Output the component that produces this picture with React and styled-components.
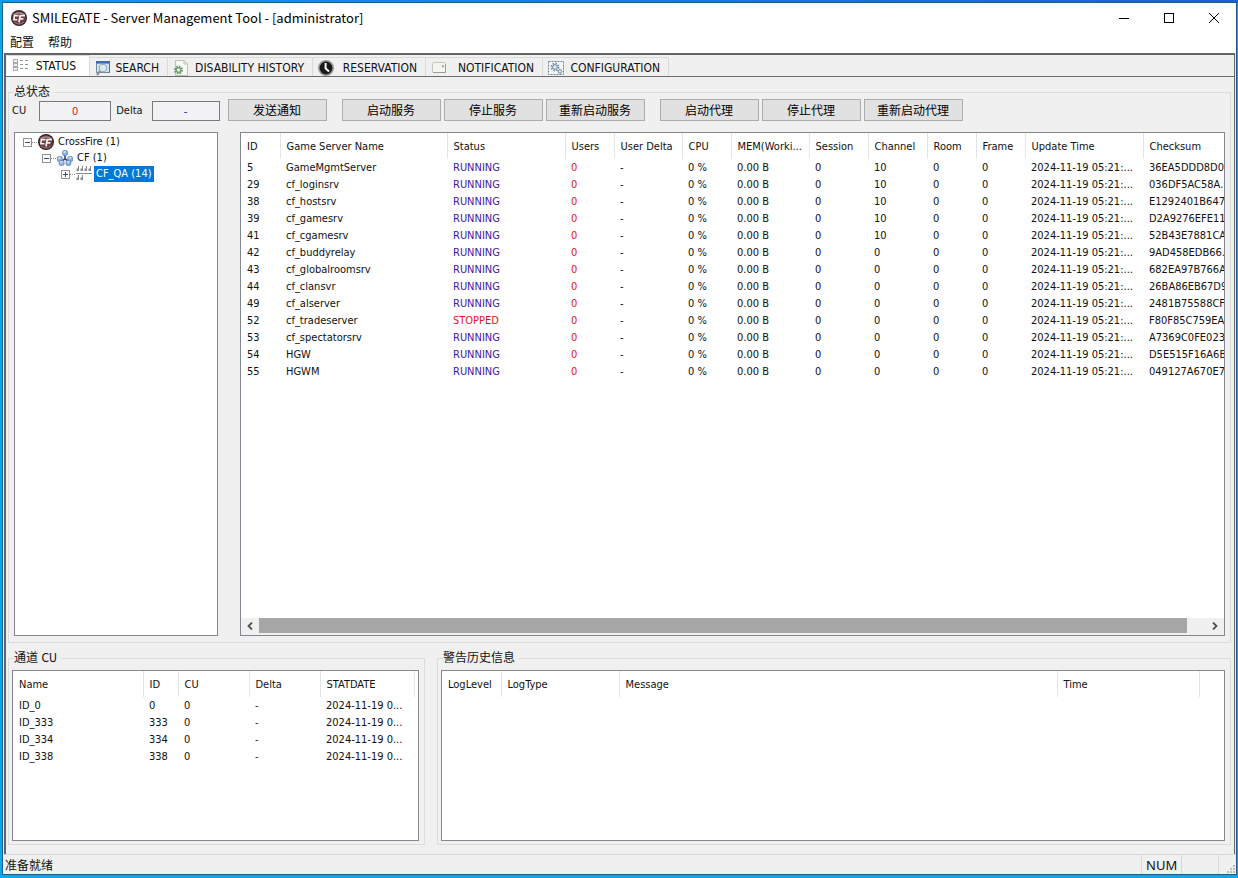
import React from "react";
import styled, { createGlobalStyle, css } from "styled-components";

const uiFont = `"DejaVu Sans Condensed", "Noto Sans CJK SC", sans-serif`;

const GlobalStyle = createGlobalStyle`
    * { box-sizing: border-box; }
    body { margin: 0; background: #18a2ea; }
    button, input { font: inherit; color: inherit; }
`;

const Desktop = styled.div`
    background: linear-gradient( to right, #0f9bea, #1c5fd0 ) top / 100% 3px no-repeat, #12a6e6;
    color: #101010;
    display: flex;
    font: 11px/14px ${ uiFont };
    min-height: 100vh;
    padding: 3px 2px 4px 3px;
`;

const Window = styled.div`
    background: #f0f0f0;
    display: flex;
    flex: 1;
    flex-direction: column;
    min-width: 0;
    outline: 1px solid #1a5f8c;
`;

const TitleBar = styled.header`
    align-items: center;
    background: #fff;
    color: #000;
    display: flex;
    font: 13px/28px "Noto Sans CJK SC", sans-serif;
    gap: 5px;
    height: 29px;
    padding-left: 8px;
`;

const Title = styled.h1`
    flex: 1;
    font: inherit;
    margin: 0;
`;

const WindowControls = styled.div`
    display: flex;
`;

const WindowButton = styled.button`
    align-items: center;
    background: none;
    border: 0;
    display: flex;
    height: 29px;
    justify-content: center;
    padding: 0;
    width: 45px;
`;

const MenuBar = styled.nav`
    background: #fff;
    display: flex;
    font-size: 12px;
    gap: 14px;
    height: 21px;
    padding-left: 7px;
`;

const MenuItem = styled.button`
    background: none;
    border: 0;
    line-height: 14px;
    padding: 0;
`;

const Frame = styled.main`
    border: solid #636363;
    border-width: 2px 1px 0 2px;
    display: flex;
    flex: 1;
    flex-direction: column;
    margin: 0 1px;
`;

const TabList = styled.div`
    border-bottom: 1px solid #6b6b6b;
    display: flex;
    height: 22px;
    padding-left: 1px;
`;

const Tab = styled.button`
    align-items: center;
    background: none;
    border: solid #dadada;
    border-width: 1px 1px 0 0;
    display: flex;
    font-size: 12px;
    justify-content: space-between;
    margin-top: 2px;
    padding: 1px 8px 0 5px;
    width: ${ props => props.$width }px;
    white-space: nowrap;

    ${ props => props.$active && css`
        background: #fff;
        margin-top: 0;
        padding: 0 13px 0 6px;
    ` }
`;

const Body = styled.div`
    display: flex;
    flex: 1;
    flex-direction: column;
    gap: 8px;
    padding: 8px 3px 9px 2px;
`;

const Group = styled.fieldset`
    border: 1px solid #dcdcdc;
    display: flex;
    flex: 1 1 0;
    flex-direction: column;
    margin: 0;
    min-width: 0;
    padding: ${ props => props.$padding };
`;

const Legend = styled.legend`
    font-size: 12px;
    line-height: 14px;
    margin-left: 2px;
    padding: 0 4px 0 0;
`;

const Toolbar = styled.div`
    align-items: flex-end;
    display: flex;
    height: 22px;
    margin-bottom: 11px;
`;

const CounterLabel = styled.label`
    align-items: center;
    display: flex;
    gap: ${ props => props.$gap }px;
    margin-right: ${ props => props.$after }px;
`;

const Counter = styled.input`
    background: #f2f2f4;
    border: 1px solid #7a7a7a;
    color: ${ props => props.$color };
    height: 20px;
    padding: 0;
    text-align: center;
    width: ${ props => props.$width }px;
`;

const ButtonGroup = styled.div`
    display: flex;
    gap: 3px;
    margin-right: 15px;
`;

const Button = styled.button`
    background: #e1e1e1;
    border: 1px solid #adadad;
    color: #000;
    font-size: 12px;
    height: 22px;
    line-height: 16px;
    padding: 1px 0 0;
    width: 99px;
`;

const Split = styled.div`
    display: grid;
    flex: 1;
    gap: 22px;
    grid-template-columns: 204px minmax( 0, 1fr );
    padding: 0 0 0 2px;
`;

const Panel = styled.div`
    background: #fff;
    border: 1px solid #828790;
    display: flex;
    flex: 1;
    flex-direction: column;
    min-width: 0;
    overflow: hidden;
`;

const Tree = styled.ul`
    list-style: none;
    margin: 0;
    padding: 1px 0 0 7px;
`;

const Branch = styled.ul`
    list-style: none;
    margin: 0;
    padding: 0 0 0 19px;
`;

const TreeRow = styled.div`
    align-items: center;
    display: flex;
    height: 16px;
`;

const TreeLabel = styled.span`
    line-height: 16px;
    margin-left: 2px;
    padding: 0 2px;
    ${ props => props.$selected && css`
        background: #0078d7;
        color: #fff;
    ` }
`;

const Table = styled.table`
    border-collapse: collapse;
    table-layout: fixed;
    width: 100%;
`;

const HeadCell = styled.th`
    border-right: 1px solid #e5e5e5;
    font-weight: normal;
    height: 26px;
    padding: 2px 0 0 6px;
    text-align: left;
    white-space: nowrap;

    &:last-child { border-right: 0; }
`;

const Cell = styled.td`
    color: ${ props => props.$color || "inherit" };
    height: 17px;
    padding: 0 0 0 6px;
    white-space: nowrap;
`;

const ScrollBar = styled.div`
    background: #f0f0f0;
    display: grid;
    grid-template-columns: 18px minmax( 0, 1fr ) 18px;
    height: 17px;
    margin-top: auto;
    padding-bottom: 2px;
`;

const ScrollTrack = styled.div`
    padding-right: 2%;
`;

const ScrollThumb = styled.div`
    background: #a6a6a6;
    height: 15px;
    width: 100%;
`;

const ScrollButton = styled.button`
    align-items: center;
    background: none;
    border: 0;
    display: flex;
    justify-content: center;
    padding: 0;
`;

const BottomRow = styled.div`
    display: grid;
    gap: 12px;
    grid-template-columns: 417px minmax( 0, 1fr );
    height: 194px;
`;

const StatusBar = styled.footer`
    border-top: 1px solid #d7d7d7;
    display: flex;
    font-size: 12px;
    height: 20px;
    line-height: 22px;
    padding-left: 2px;
`;

const StatusText = styled.span`
    flex: 1;
`;

const StatusPane = styled.span`
    border-left: 1px solid #d7d7d7;
    font: 13px/20px "Noto Sans", sans-serif;
    padding-left: 4px;
    width: ${ props => props.$width }px;
`;

const GripPane = styled( StatusPane )`
    align-items: flex-end;
    display: flex;
    justify-content: flex-end;
`;

const FireLogo = () => (
    <svg width="16" height="16" viewBox="0 0 16 16">
        <circle cx="8" cy="8" r="8" fill="#2e2427" />
        <circle cx="8" cy="8" r="6.8" fill="#6b3c42" />
        <path d="M2.5 5 Q8 .8 13.5 5" fill="none" stroke="#b79a9c" strokeWidth="1.2" />
        <path d="M3 12 Q8 16 13 12" fill="none" stroke="#9b7a7d" />
        <path d="M7.6 5.6H3.4L2.8 9.8H6.4" fill="none" stroke="#f3eeee" strokeWidth="1.6" />
        <path d="M14 5.6H9.2L8 12.4M8.8 8.8H12.4" fill="none" stroke="#f3eeee" strokeWidth="1.8" />
    </svg>
);

const ListIcon = () => (
    <svg width="16" height="16" viewBox="0 0 16 16" shapeRendering="crispEdges">
        { [ 1, 5, 9 ].map( y => (
            <g key={ y }>
                <rect x="0.5" y={ y + 0.5 } width="4" height="3" fill="#eef1f2" stroke="#a5adb2" />
                <path d={ `M7 ${ y + 1.5 }H10M12 ${ y + 1.5 }H15` } stroke="#8b989f" />
            </g>
        ) ) }
    </svg>
);

const SearchIcon = () => (
    <svg width="16" height="16" viewBox="0 0 16 16">
        <rect x="1.5" y="1.5" width="13" height="11" fill="#cfe4ef" stroke="#6f8ba3" />
        <rect x="1" y="1" width="14" height="2.6" fill="#3d6fb0" />
        <path d="M14.5 3V12.5" stroke="#3d6fb0" />
        <circle cx="8" cy="8" r="3.8" fill="#dcebf2" stroke="#8fa8b5" />
        <path d="M5.2 11L2 15" stroke="#9a8f80" strokeWidth="2.2" />
    </svg>
);

const HistoryIcon = () => (
    <svg width="16" height="16" viewBox="0 0 16 16">
        <path d="M2.5 .5H11L14.5 4V15.5H2.5Z" fill="#f6f9f4" stroke="#b8c3b6" />
        <path d="M11 .5V4H14.5" fill="none" stroke="#b8c3b6" />
        <circle cx="5.5" cy="10" r="3.6" fill="none" stroke="#6f9d71" strokeWidth="2" strokeDasharray="1.6 1.2" />
        <circle cx="5.5" cy="10" r="2.4" fill="#e5efe2" stroke="#6b9670" strokeWidth="1.2" />
    </svg>
);

const ClockIcon = () => (
    <svg width="16" height="16" viewBox="0 0 16 16">
        <circle cx="8" cy="8" r="7.2" fill="#17191b" stroke="#9a9a9a" strokeWidth="1.6" />
        <path d="M7.6 3V8.4L11 11.6" fill="none" stroke="#fff" strokeWidth="2" />
    </svg>
);

const NoteIcon = () => (
    <svg width="16" height="16" viewBox="0 0 16 16">
        <rect x="1.5" y="2.5" width="13" height="10" rx="1" fill="#f5f5ef" stroke="#c3c5bb" />
        <path d="M2 12.5H14.5M14.5 4V12.5" stroke="#9b9e96" />
        <rect x="11" y="5" width="2" height="2.5" fill="#aeb58f" />
    </svg>
);

const ConfigIcon = () => (
    <svg width="16" height="16" viewBox="0 0 16 16">
        <rect x=".5" y="1.5" width="15" height="13" fill="#f2f6f9" stroke="#6c8496" strokeDasharray="2 1" />
        <circle cx="7" cy="7" r="3.6" fill="none" stroke="#7892a5" strokeWidth="1.8" strokeDasharray="1.6 1.2" />
        <circle cx="7" cy="7" r="2.4" fill="#dfe9ef" stroke="#6d889c" />
        <circle cx="12" cy="11.5" r="1.8" fill="#dfe9ef" stroke="#6d889c" />
    </svg>
);

const ClusterIcon = () => (
    <svg width="16" height="16" viewBox="0 0 16 16">
        <path d="M8 4V9L3 12M8 9L13 12" fill="none" stroke="#33496f" strokeWidth="1.6" />
        { [ [ 8, 3 ], [ 2.8, 9 ], [ 13.2, 9 ], [ 4.6, 13 ], [ 11.4, 13 ] ].map( ( [ x, y ] ) => (
            <g key={ `${ x }-${ y }` }>
                <rect x={ x - 2.4 } y={ y - 2.4 } width="4.8" height="4.8" rx="1.4" fill="#8db4e3" stroke="#6285b8" strokeWidth=".8" />
                <path d={ `M${ x - 1.5 } ${ y - 1 }H${ x + 1 }` } stroke="#dcecff" strokeWidth="1.4" />
            </g>
        ) ) }
    </svg>
);

const RackIcon = () => (
    <svg width="16" height="16" viewBox="0 0 16 16">
        <path d="M0 7.5H16" stroke="#8b8b8b" />
        { [ [ 1, 0 ], [ 5, 0 ], [ 9, 0 ], [ 13, 0 ], [ 1, 9 ], [ 5, 9 ] ].map( ( [ x, y ] ) => (
            <g key={ `${ x }-${ y }` }>
                <path d={ `M${ x + 1.5 } ${ y }V${ y + 5 }` } stroke="#8a8a8a" />
                <rect x={ x - 0.5 } y={ y + 2.5 } width="2" height="2.5" fill="#8a8a8a" />
            </g>
        ) ) }
    </svg>
);

// Expander box followed by the dotted line to the node's icon
const Expander = ( { open } ) => (
    <svg width="16" height="16" viewBox="0 0 16 16" shapeRendering="crispEdges">
        <path d="M10 8.5H16" stroke="#8a8a8a" strokeDasharray="1 1" />
        <rect x="1.5" y="4.5" width="8" height="8" fill="#fff" stroke="#919191" />
        <path d={ open ? "M3 8.5H8" : "M3 8.5H8M5.5 6V11" } stroke="#2c4a8c" />
    </svg>
);

const Chevron = ( { right } ) => (
    <svg width="8" height="8" viewBox="0 0 8 8">
        <path d={ right ? "M2 .5L5.5 4L2 7.5" : "M6 .5L2.5 4L6 7.5" } fill="none" stroke="#505050" strokeWidth="1.8" />
    </svg>
);

const Grip = () => (
    <svg width="9" height="9" viewBox="0 0 9 9">
        <path d="M6 0h2v2h-2zM3 3h2v2h-2zM6 3h2v2h-2zM0 6h2v2h-2zM3 6h2v2h-2zM6 6h2v2h-2z" fill="#bdbdbd" />
    </svg>
);

const tabs = [
    { label: "STATUS", width: 83, Icon: ListIcon, active: true },
    { label: "SEARCH", width: 78, Icon: SearchIcon },
    { label: "DISABILITY HISTORY", width: 145, Icon: HistoryIcon },
    { label: "RESERVATION", width: 113, Icon: ClockIcon },
    { label: "NOTIFICATION", width: 117, Icon: NoteIcon },
    { label: "CONFIGURATION", width: 126, Icon: ConfigIcon },
];

const serverColumns = [
    [ "ID", 39 ], [ "Game Server Name", 167 ], [ "Status", 118 ], [ "Users", 49 ], [ "User Delta", 68 ],
    [ "CPU", 49 ], [ "MEM(Worki...", 78 ], [ "Session", 59 ], [ "Channel", 59 ], [ "Room", 49 ],
    [ "Frame", 49 ], [ "Update Time", 118 ], [ "Checksum" ],
];

const servers = [
    [ 5, "GameMgmtServer", 10, "36EA5DDD8D0." ],
    [ 29, "cf_loginsrv", 10, "036DF5AC58A." ],
    [ 38, "cf_hostsrv", 10, "E1292401B647" ],
    [ 39, "cf_gamesrv", 10, "D2A9276EFE11" ],
    [ 41, "cf_cgamesrv", 10, "52B43E7881CA" ],
    [ 42, "cf_buddyrelay", 0, "9AD458EDB66." ],
    [ 43, "cf_globalroomsrv", 0, "682EA97B766A" ],
    [ 44, "cf_clansvr", 0, "26BA86EB67D9" ],
    [ 49, "cf_alserver", 0, "2481B75588CF" ],
    [ 52, "cf_tradeserver", 0, "F80F85C759EA" ],
    [ 53, "cf_spectatorsrv", 0, "A7369C0FE023" ],
    [ 54, "HGW", 0, "D5E515F16A6B" ],
    [ 55, "HGWM", 0, "049127A670E7" ],
];

const channelColumns = [ [ "Name", 130 ], [ "ID", 35 ], [ "CU", 71 ], [ "Delta", 71 ], [ "STATDATE", 94 ], [ "" ] ];
const channels = [ 0, 333, 334, 338 ];
const logColumns = [ [ "LogLevel", 59 ], [ "LogType", 118 ], [ "Message" ], [ "Time", 142 ], [ "", 25 ] ];

const Columns = ( { columns } ) => (
    <>
        <colgroup>
            { columns.map( ( [ label, width ] ) => <col key={ label } width={ width } /> ) }
        </colgroup>
        <thead>
            <tr>
                { columns.map( ( [ label ] ) => <HeadCell key={ label }>{ label }</HeadCell> ) }
            </tr>
        </thead>
    </>
);

const ServerRow = ( { server } ) => {
    const [ id, name, channel, checksum ] = server;
    const stopped = name === "cf_tradeserver";

    return (
        <tr>
            <Cell>{ id }</Cell>
            <Cell>{ name }</Cell>
            <Cell $color={ stopped ? "#e01818" : "#3a18a8" }>{ stopped ? "STOPPED" : "RUNNING" }</Cell>
            <Cell $color="#e01818">0</Cell>
            <Cell>-</Cell>
            <Cell>0 %</Cell>
            <Cell>0.00 B</Cell>
            <Cell>0</Cell>
            <Cell>{ channel }</Cell>
            <Cell>0</Cell>
            <Cell>0</Cell>
            <Cell>2024-11-19 05:21:...</Cell>
            <Cell>{ checksum }</Cell>
        </tr>
    );
};

const App = () => {
    return (
        <Desktop>
            <GlobalStyle />
            <Window>
                <TitleBar>
                    <FireLogo />
                    <Title>SMILEGATE - Server Management Tool - [administrator]</Title>
                    <WindowControls>
                        <WindowButton aria-label="Minimize">
                            <svg width="10" height="10"><path d="M0 5.5H10" stroke="#000" /></svg>
                        </WindowButton>
                        <WindowButton aria-label="Maximize">
                            <svg width="10" height="10"><rect x=".5" y=".5" width="9" height="9" fill="none" stroke="#000" /></svg>
                        </WindowButton>
                        <WindowButton aria-label="Close">
                            <svg width="10" height="10"><path d="M0 0L10 10M10 0L0 10" stroke="#000" /></svg>
                        </WindowButton>
                    </WindowControls>
                </TitleBar>
                <MenuBar>
                    <MenuItem>配置</MenuItem>
                    <MenuItem>帮助</MenuItem>
                </MenuBar>
                <Frame>
                    <TabList role="tablist">
                        { tabs.map( ( { label, width, Icon, active } ) => (
                            <Tab key={ label } role="tab" aria-selected={ !!active } $active={ active } $width={ width }>
                                <Icon />
                                { label }
                            </Tab>
                        ) ) }
                    </TabList>
                    <Body>
                        <Group $padding="0 5px 6px 3px">
                            <Legend>总状态</Legend>
                            <Toolbar>
                                <CounterLabel $gap={ 13 } $after={ 5 }>
                                    CU
                                    <Counter readOnly value="0" $color="#e01818" $width={ 72 } />
                                </CounterLabel>
                                <CounterLabel $gap={ 9 } $after={ 8 }>
                                    Delta
                                    <Counter readOnly value="-" $color="#2020c0" $width={ 68 } />
                                </CounterLabel>
                                <ButtonGroup>
                                    <Button>发送通知</Button>
                                </ButtonGroup>
                                <ButtonGroup>
                                    <Button>启动服务</Button>
                                    <Button>停止服务</Button>
                                    <Button>重新启动服务</Button>
                                </ButtonGroup>
                                <ButtonGroup>
                                    <Button>启动代理</Button>
                                    <Button>停止代理</Button>
                                    <Button>重新启动代理</Button>
                                </ButtonGroup>
                            </Toolbar>
                            <Split>
                                <Panel>
                                    <Tree>
                                        <li>
                                            <TreeRow><Expander open /><FireLogo /><TreeLabel>CrossFire (1)</TreeLabel></TreeRow>
                                            <Branch>
                                                <li>
                                                    <TreeRow><Expander open /><ClusterIcon /><TreeLabel>CF (1)</TreeLabel></TreeRow>
                                                    <Branch>
                                                        <li>
                                                            <TreeRow><Expander /><RackIcon /><TreeLabel $selected>CF_QA (14)</TreeLabel></TreeRow>
                                                        </li>
                                                    </Branch>
                                                </li>
                                            </Branch>
                                        </li>
                                    </Tree>
                                </Panel>
                                <Panel>
                                    <Table>
                                        <Columns columns={ serverColumns } />
                                        <tbody>
                                            { servers.map( server => <ServerRow key={ server[ 0 ] } server={ server } /> ) }
                                        </tbody>
                                    </Table>
                                    <ScrollBar>
                                        <ScrollButton aria-label="Scroll left"><Chevron /></ScrollButton>
                                        <ScrollTrack><ScrollThumb /></ScrollTrack>
                                        <ScrollButton aria-label="Scroll right"><Chevron right /></ScrollButton>
                                    </ScrollBar>
                                </Panel>
                            </Split>
                        </Group>
                        <BottomRow>
                            <Group $padding="5px 5px 3px 3px">
                                <Legend>通道 CU</Legend>
                                <Panel>
                                    <Table>
                                        <Columns columns={ channelColumns } />
                                        <tbody>
                                            { channels.map( id => (
                                                <tr key={ id }>
                                                    <Cell>ID_{ id }</Cell>
                                                    <Cell>{ id }</Cell>
                                                    <Cell>0</Cell>
                                                    <Cell $color="#20204c">-</Cell>
                                                    <Cell>2024-11-19 0...</Cell>
                                                    <Cell />
                                                </tr>
                                            ) ) }
                                        </tbody>
                                    </Table>
                                </Panel>
                            </Group>
                            <Group $padding="5px 5px 3px 3px">
                                <Legend>警告历史信息</Legend>
                                <Panel>
                                    <Table>
                                        <Columns columns={ logColumns } />
                                    </Table>
                                </Panel>
                            </Group>
                        </BottomRow>
                    </Body>
                </Frame>
                <StatusBar>
                    <StatusText>准备就绪</StatusText>
                    <StatusPane $width={ 40 }>NUM</StatusPane>
                    <StatusPane $width={ 37 } />
                    <GripPane $width={ 18 }><Grip /></GripPane>
                </StatusBar>
            </Window>
        </Desktop>
    );
};

export default App;
